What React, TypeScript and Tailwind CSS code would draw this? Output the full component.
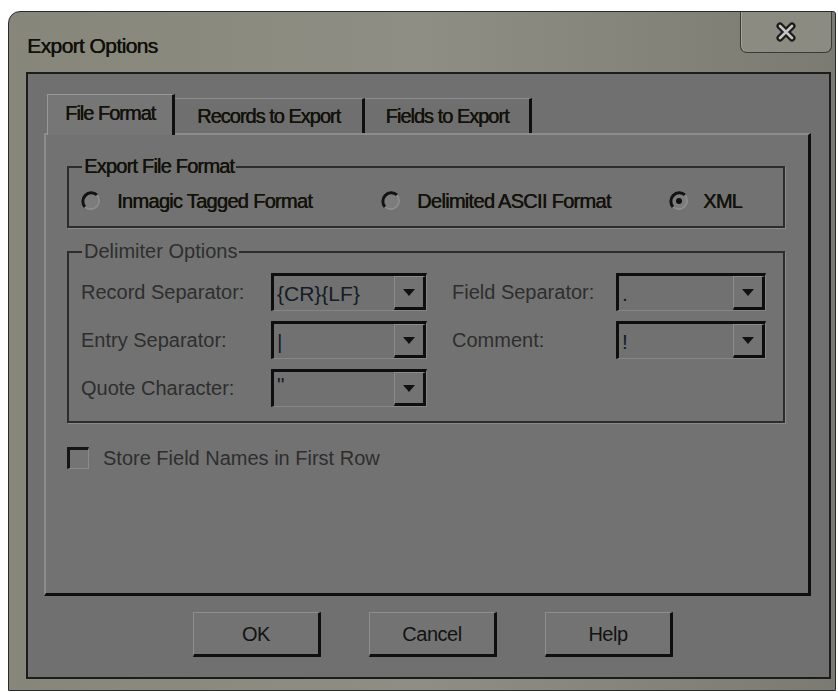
import React from 'react';

const font = "font-['Liberation_Sans',Arial,sans-serif]";
// heavier strokes for the enabled, black labels
const heavy = '[text-shadow:0.5px_0_0_currentColor]';

function Radio({ checked }: { checked?: boolean }) {
  return (
    <svg width="22" height="22" viewBox="0 0 22 22" className="shrink-0">
      <circle cx="11" cy="11" r="8.5" fill="#7c7c7c" />
      <path d="M17 5 A8.5 8.5 0 0 0 5 17" fill="none" stroke="#121212" strokeWidth="3" />
      <path d="M5 17 A8.5 8.5 0 0 0 17 5" fill="none" stroke="#8e8e8e" strokeWidth="1.6" />
      {checked && <circle cx="11" cy="11" r="3" fill="#0e0e0e" />}
    </svg>
  );
}

function Combo({ value, top }: { value: string; top?: boolean }) {
  return (
    <div className="flex h-[38px] border-t-[3px] border-l-[3px] border-t-[#0e0e0e] border-l-[#0e0e0e] border-b border-r border-b-[#868686] border-r-[#868686] bg-[#717171]">
      <div className={`flex-1 pl-[3px] text-[21px] leading-none text-[#141c28] flex ${top ? 'items-start pt-[2px]' : 'items-center'}`}>
        {value}
      </div>
      <div className="w-[32px] flex items-center justify-center border-t border-l border-t-[#8c8c8c] border-l-[#8c8c8c] border-b-[3px] border-r-[3px] border-b-[#0e0e0e] border-r-[#0e0e0e] bg-[#737373]">
        <svg width="12" height="7" viewBox="0 0 12 7">
          <path d="M0 0 H12 L6 7 Z" fill="#111" />
        </svg>
      </div>
    </div>
  );
}

function Group({ title, dim, className, children }: { title: string; dim?: boolean; className?: string; children: React.ReactNode }) {
  return (
    <div className={`relative border-2 border-[#2c2c2c] shadow-[1px_1px_0_#8a8a8a] ${className ?? ''}`}>
      <span className={`absolute -top-[13px] left-[13px] px-[2px] bg-[#727272] text-[20px] leading-[22px] ${dim ? 'text-[#2e2e2e]' : `text-[#12110a] tracking-[-0.8px] ${heavy}`}`}>
        {title}
      </span>
      {children}
    </div>
  );
}

function DlgButton({ label }: { label: string }) {
  return (
    <button className="w-[128px] h-[45px] bg-[#737373] border-t border-l border-t-[#8e8e8e] border-l-[#8e8e8e] border-b-[3px] border-r-[3px] border-b-[#0f0f0f] border-r-[#0f0f0f] text-[20px] text-[#121212] tracking-[-0.5px] flex items-center justify-center">
      {label}
    </button>
  );
}

export default function App() {
  return (
    <div className={`w-[838px] h-[692px] bg-white pt-[11px] pl-[8px] overflow-hidden ${font}`}>
      <div className="w-[828px] h-[680px] rounded-tl-[12px] rounded-tr-[3px] border border-[#2a2a2a] bg-gradient-to-r from-[#86867a] via-[#8f8e84] to-[#7b7b71] flex flex-col">
        {/* title bar */}
        <div className="h-[60px] flex items-start justify-between">
          <div className={`pl-[18px] pt-[23px] text-[21px] leading-none text-[#100f0a] tracking-[-0.6px] ${heavy}`}>Export Options</div>
          <button className="mr-[3px] w-[92px] h-[41px] rounded-b-[7px] border border-t-0 border-[#3a3a36] bg-[#8b8b81] shadow-[inset_1px_0_0_#a4a49a] flex items-center justify-center">
            <svg width="22" height="20" viewBox="0 0 22 20">
              <path d="M5 4 L17 16 M17 4 L5 16" stroke="#1a1a1a" strokeWidth="7" strokeLinecap="round" />
              <path d="M5 4 L17 16 M17 4 L5 16" stroke="#c4c4c0" strokeWidth="2.6" strokeLinecap="round" />
            </svg>
          </button>
        </div>

        {/* client area */}
        <div className="ml-[17px] w-[805px] h-[607px] border-2 border-[#1c1c1c] bg-[#707070] flex flex-col">
          <div className="pl-[16px] pt-[19px]">
            {/* tabs */}
            <div className={`flex items-end pl-[3px] h-[40px] text-[20px] text-[#12110a] tracking-[-1px] ${heavy}`}>
              <div className="relative z-10 -mb-[2px] w-[128px] h-[41px] bg-[#767676] border-t border-l border-t-[#999] border-l-[#999] border-r-[3px] border-r-[#0f0f0f] flex items-center justify-center pb-[4px]">
                File Format
              </div>
              <div className="w-[190px] h-[35px] bg-[#6f6f6f] border-t border-t-[#8e8e8e] border-r-[3px] border-r-[#0f0f0f] flex items-center justify-center">
                Records to Export
              </div>
              <div className="w-[167px] h-[35px] bg-[#6f6f6f] border-t border-t-[#8e8e8e] border-r-[3px] border-r-[#0f0f0f] flex items-center justify-center">
                Fields to Export
              </div>
            </div>

            {/* tab page */}
            <div className="w-[767px] h-[463px] bg-[#727272] border-t-2 border-l-2 border-t-[#8c8c8c] border-l-[#8c8c8c] border-b-[3px] border-r-[3px] border-b-[#0f0f0f] border-r-[#0f0f0f] pl-[21px] pt-[31px]">
              <Group title="Export File Format" className="w-[718px] h-[62px]">
                <div className={`flex items-center h-full pt-[8px] pl-[11px] text-[20px] text-[#12110a] tracking-[-0.7px] ${heavy}`}>
                  <label className="w-[300px] flex items-center gap-[15px]">
                    <Radio />
                    Inmagic Tagged Format
                  </label>
                  <label className="w-[288px] flex items-center gap-[15px]">
                    <Radio />
                    Delimited ASCII Format
                  </label>
                  <label className="flex items-center gap-[13px]">
                    <Radio checked />
                    XML
                  </label>
                </div>
              </Group>

              <Group title="Delimiter Options" dim className="mt-[23px] w-[718px] h-[172px]">
                <div className="grid grid-cols-[190px_156px_25px_164px_150px] gap-y-[10px] pl-[12px] pt-[20px] text-[20px] text-[#2e2e2e] items-center">
                  <span>Record Separator:</span>
                  <Combo value="{CR}{LF}" />
                  <span />
                  <span>Field Separator:</span>
                  <Combo value="." />

                  <span>Entry Separator:</span>
                  <Combo value="|" />
                  <span />
                  <span>Comment:</span>
                  <Combo value="!" />

                  <span>Quote Character:</span>
                  <Combo value={'"'} top />
                </div>
              </Group>

              <label className="mt-[20px] flex items-center gap-[14px] text-[20px] text-[#2e2e2e]">
                <span className="w-[22px] h-[22px] border-t-[3px] border-l-[3px] border-t-[#141414] border-l-[#141414] border-b border-r border-b-[#8a8a8a] border-r-[#8a8a8a] bg-[#747474]" />
                Store Field Names in First Row
              </label>
            </div>
          </div>

          {/* dialog buttons */}
          <div className="mt-[16px] pl-[165px] flex gap-[48px]">
            <DlgButton label="OK" />
            <DlgButton label="Cancel" />
            <DlgButton label="Help" />
          </div>
        </div>
      </div>
    </div>
  );
}
